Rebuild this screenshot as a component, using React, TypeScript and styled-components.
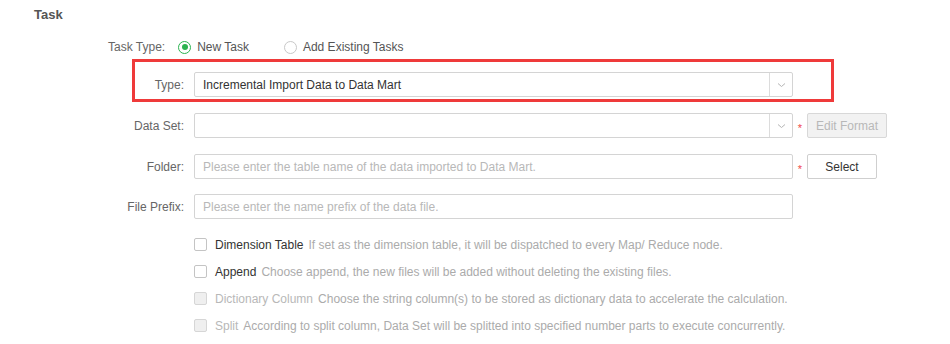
import React from 'react'
import styled, { createGlobalStyle } from 'styled-components'

const GlobalStyle = createGlobalStyle`
    html, body {
        margin: 0;
        padding: 0;
        background: #ffffff;
    }
    body {
        font-family: "Liberation Sans", Arial, sans-serif;
        font-size: 12px;
        color: #333;
    }
`

const Page = styled.div`
    width: 950px;
    height: 344px;
    overflow: hidden;
`
const Title = styled.div`
    padding: 6px 0 0 34px;
    font-size: 13px;
    font-weight: bold;
    line-height: 18px;
    color: #555;
`
const TaskTypeRow = styled.div`
    display: flex;
    align-items: center;
    height: 20px;
    margin-top: 13px;
    padding-left: 108px;
    color: #666;
`
const RadioOption = styled.label<{ gap?: number }>`
    display: flex;
    align-items: center;
    margin-left: ${(p) => p.gap ?? 0}px;
    color: #555;
`
const RadioCircle = styled.span<{ checked?: boolean }>`
    position: relative;
    width: 13px;
    height: 13px;
    box-sizing: border-box;
    border-radius: 50%;
    border: 1px solid ${(p) => (p.checked ? '#2bb34f' : '#c8c8c8')};
    margin-right: 6px;
    &::after {
        content: '';
        display: ${(p) => (p.checked ? 'block' : 'none')};
        position: absolute;
        left: 2.5px;
        top: 2.5px;
        width: 6px;
        height: 6px;
        border-radius: 50%;
        background: #2bb34f;
    }
`
const Highlight = styled.div`
    margin: 2px 0 0 132px;
    width: 702px;
    height: 43px;
    box-sizing: border-box;
    border: 3px solid #ef3a3a;
    padding-top: 10px;
`
const Row = styled.div<{ top?: number }>`
    display: flex;
    align-items: center;
    height: 25px;
    margin-top: ${(p) => p.top ?? 0}px;
`
const Label = styled.div<{ width: number }>`
    flex: 0 0 ${(p) => p.width}px;
    text-align: right;
    margin-right: 10px;
    color: #666;
    white-space: nowrap;
`
const Field = styled.div`
    display: flex;
    align-items: center;
    width: 599px;
    height: 25px;
    box-sizing: border-box;
    border: 1px solid #d4d4d4;
    border-radius: 2px;
    background: #fff;
`
const FieldText = styled.div<{ placeholder?: boolean }>`
    flex: 1;
    padding-left: 8px;
    color: ${(p) => (p.placeholder ? '#b8b8b8' : '#333')};
    white-space: nowrap;
    overflow: hidden;
`
const ArrowBox = styled.div`
    width: 22px;
    height: 100%;
    border-left: 1px solid #dcdcdc;
    display: flex;
    align-items: center;
    justify-content: center;
`
const Required = styled.span`
    width: 14px;
    text-align: center;
    color: #f04848;
    font-size: 11px;
    padding-top: 4px;
`
const Button = styled.div<{ disabled?: boolean; width: number }>`
    width: ${(p) => p.width}px;
    height: 25px;
    box-sizing: border-box;
    border: 1px solid ${(p) => (p.disabled ? '#d8d8d8' : '#cfcfcf')};
    border-radius: 2px;
    background: ${(p) => (p.disabled ? '#f2f2f2' : '#fff')};
    color: ${(p) => (p.disabled ? '#b8b8b8' : '#333')};
    display: flex;
    align-items: center;
    justify-content: center;
`
const Options = styled.div`
    margin-top: 12px;
    padding-left: 194px;
`
const CheckRow = styled.div`
    display: flex;
    align-items: center;
    height: 27px;
    white-space: nowrap;
`
const CheckBox = styled.span<{ disabled?: boolean }>`
    width: 13px;
    height: 13px;
    box-sizing: border-box;
    border: 1px solid ${(p) => (p.disabled ? '#d6d6d6' : '#c4c4c4')};
    border-radius: 2px;
    background: ${(p) => (p.disabled ? '#efefef' : '#fff')};
    margin-right: 8px;
`
const CheckLabel = styled.span<{ disabled?: boolean }>`
    color: ${(p) => (p.disabled ? '#b8b8b8' : '#333')};
`
const CheckHint = styled.span`
    margin-left: 5px;
    color: #ababab;
`

const Chevron = () => (
    <svg width="9" height="6" viewBox="0 0 9 6">
        <path d="M1 1.5 L4.5 4.5 L8 1.5" fill="none" stroke="#b5b5b5" strokeWidth="1" />
    </svg>
)

const options = [
    { id: 1, label: 'Dimension Table', hint: 'If set as the dimension table, it will be dispatched to every Map/ Reduce node.', disabled: false },
    { id: 2, label: 'Append', hint: 'Choose append, the new files will be added without deleting the existing files.', disabled: false },
    { id: 3, label: 'Dictionary Column', hint: 'Choose the string column(s) to be stored as dictionary data to accelerate the calculation.', disabled: true },
    { id: 4, label: 'Split', hint: 'According to split column, Data Set will be splitted into specified number parts to execute concurrently.', disabled: true },
]

const App = () => {
    return (
        <Page>
            <GlobalStyle />
            <Title>Task</Title>
            <TaskTypeRow>
                Task Type:
                <RadioOption gap={13}>
                    <RadioCircle checked />
                    New Task
                </RadioOption>
                <RadioOption gap={35}>
                    <RadioCircle />
                    Add Existing Tasks
                </RadioOption>
            </TaskTypeRow>

            <Highlight>
                <Row>
                    <Label width={49}>Type:</Label>
                    <Field>
                        <FieldText>Incremental Import Data to Data Mart</FieldText>
                        <ArrowBox><Chevron /></ArrowBox>
                    </Field>
                </Row>
            </Highlight>

            <Row top={11}>
                <Label width={184}>Data Set:</Label>
                <Field>
                    <FieldText />
                    <ArrowBox><Chevron /></ArrowBox>
                </Field>
                <Required>*</Required>
                <Button disabled width={80}>Edit Format</Button>
            </Row>

            <Row top={16}>
                <Label width={184}>Folder:</Label>
                <Field>
                    <FieldText placeholder>Please enter the table name of the data imported to Data Mart.</FieldText>
                </Field>
                <Required>*</Required>
                <Button width={70}>Select</Button>
            </Row>

            <Row top={15}>
                <Label width={184}>File Prefix:</Label>
                <Field>
                    <FieldText placeholder>Please enter the name prefix of the data file.</FieldText>
                </Field>
            </Row>

            <Options>
                {options.map((item) => (
                    <CheckRow key={item.id}>
                        <CheckBox disabled={item.disabled} />
                        <CheckLabel disabled={item.disabled}>{item.label}</CheckLabel>
                        <CheckHint>{item.hint}</CheckHint>
                    </CheckRow>
                ))}
            </Options>
        </Page>
    )
}

export default App
